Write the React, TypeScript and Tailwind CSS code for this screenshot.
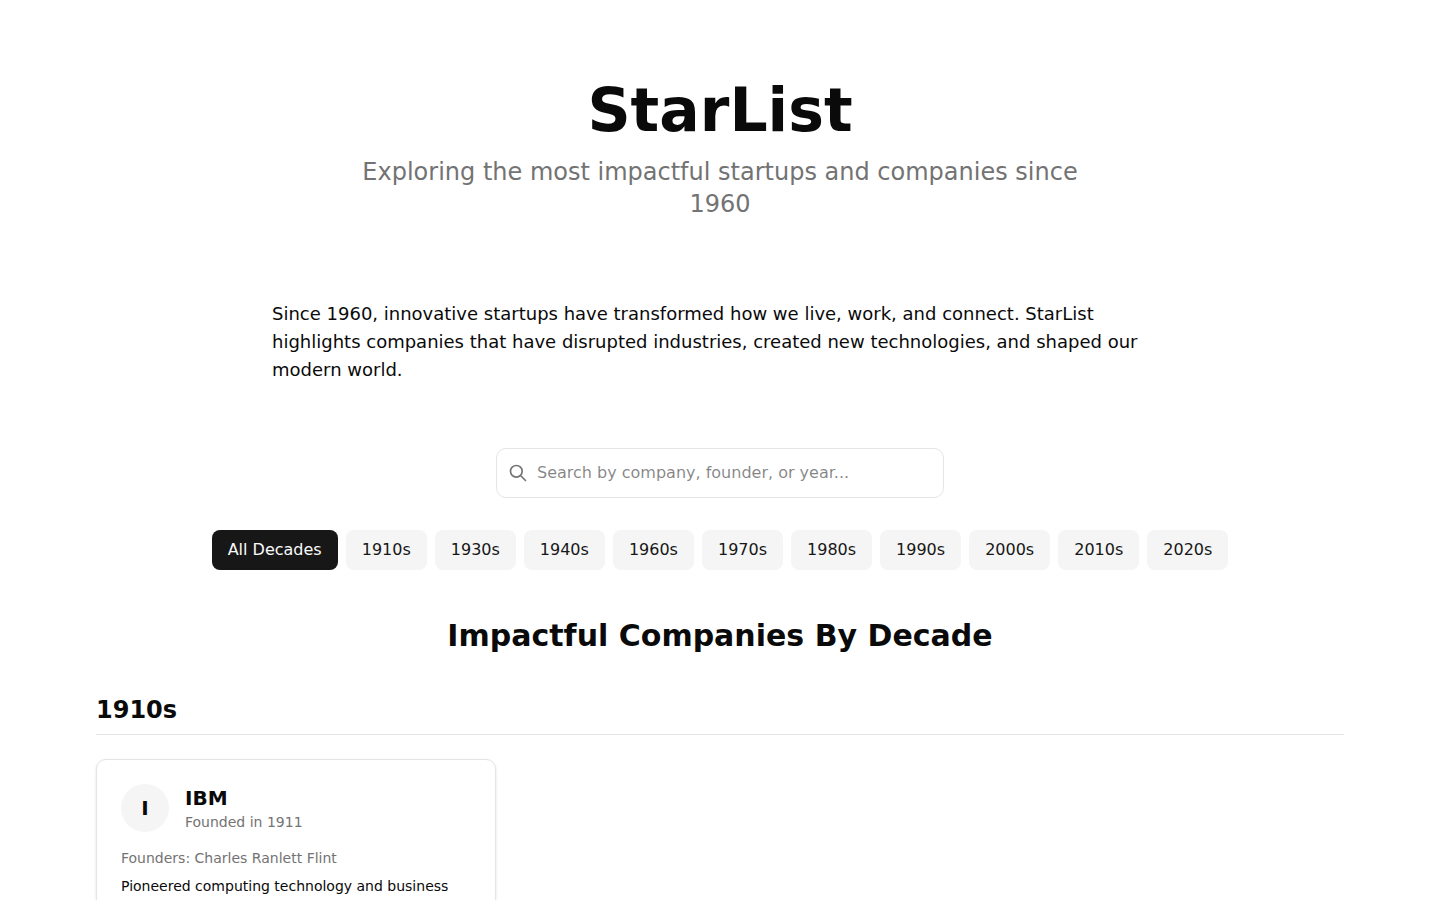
import { useState } from "react";

const decades = ["1910s", "1930s", "1940s", "1960s", "1970s", "1980s", "1990s", "2000s", "2010s", "2020s"];

const companies = [
  {
    name: "IBM",
    year: 1911,
    decade: "1910s",
    founders: "Charles Ranlett Flint",
    impact: "Pioneered computing technology and business",
  },
];

const Hero = () => (
  <header className="py-20 px-4 flex flex-col items-center text-center">
    <h1 className="text-6xl font-bold mb-4">StarList</h1>
    <p className="text-2xl text-[#737373] max-w-3xl">
      Exploring the most impactful startups and companies since 1960
    </p>
  </header>
);

const SearchBar = ({ value, onChange }: { value: string; onChange: (value: string) => void }) => (
  <div className="relative w-full max-w-md mx-auto mb-8">
    <svg
      className="absolute left-3 top-1/2 -translate-y-1/2 size-5 text-[#737373] pointer-events-none"
      viewBox="0 0 24 24"
      fill="none"
      stroke="currentColor"
      strokeWidth={2}
      strokeLinecap="round"
      strokeLinejoin="round"
      aria-hidden="true"
    >
      <path d="M21 21l-6-6m2-5a7 7 0 11-14 0 7 7 0 0114 0z" />
    </svg>
    <input
      type="text"
      aria-label="Search companies"
      placeholder="Search by company, founder, or year..."
      value={value}
      onChange={(e) => onChange(e.target.value)}
      className="w-full pl-10 pr-4 py-3 rounded-[10px] border border-[#e5e5e5] bg-white"
    />
  </div>
);

const CompanyCard = ({ company }: { company: (typeof companies)[number] }) => (
  <article className="p-6 rounded-[10px] border border-[#e5e5e5] bg-white shadow-sm">
    <div className="flex items-center gap-4 mb-4">
      <div className="size-12 rounded-full bg-[#f5f5f5] flex items-center justify-center text-xl font-bold">
        {company.name.charAt(0)}
      </div>
      <div>
        <h4 className="text-xl font-semibold">{company.name}</h4>
        <p className="text-sm text-[#737373]">Founded in {company.year}</p>
      </div>
    </div>
    <p className="text-sm text-[#737373] mb-2">Founders: {company.founders}</p>
    <p className="text-sm">{company.impact}</p>
  </article>
);

const App = () => {
  const [search, setSearch] = useState("");
  const [selected, setSelected] = useState("All Decades");

  const query = search.toLowerCase();
  const visible = companies.filter(
    (c) =>
      (selected === "All Decades" || c.decade === selected) &&
      `${c.name} ${c.founders} ${c.year}`.toLowerCase().includes(query)
  );

  return (
    <div className="min-h-screen bg-white text-[#0a0a0a] font-['DejaVu_Sans',sans-serif]">
      <Hero />
      <section className="max-w-4xl mx-auto mb-16">
        <p className="text-lg">
          Since 1960, innovative startups have transformed how we live, work, and connect. StarList
          highlights companies that have disrupted industries, created new technologies, and shaped our
          modern world.
        </p>
      </section>
      <main className="max-w-7xl mx-auto px-4">
        <SearchBar value={search} onChange={setSearch} />
        <div className="flex flex-wrap justify-center gap-2 mb-12">
          {["All Decades", ...decades].map((decade) => (
            <button
              key={decade}
              type="button"
              aria-pressed={selected === decade}
              onClick={() => setSelected(decade)}
              className={
                selected === decade
                  ? "px-4 py-2 rounded-lg bg-[#171717] text-[#fafafa] cursor-pointer"
                  : "px-4 py-2 rounded-lg bg-[#f5f5f5] text-[#171717] cursor-pointer"
              }
            >
              {decade}
            </button>
          ))}
        </div>
        <h2 className="text-3xl font-bold text-center mb-10">Impactful Companies By Decade</h2>
        {decades
          .filter((decade) => visible.some((c) => c.decade === decade))
          .map((decade) => (
            <section key={decade} className="mb-16">
              <h3 className="text-2xl font-bold mb-6 pb-2 border-b border-[#e5e5e5]">{decade}</h3>
              <div className="grid grid-cols-1 md:grid-cols-2 lg:grid-cols-3 gap-6">
                {visible
                  .filter((c) => c.decade === decade)
                  .map((company) => (
                    <CompanyCard key={company.name} company={company} />
                  ))}
              </div>
            </section>
          ))}
      </main>
    </div>
  );
};

export default App;
